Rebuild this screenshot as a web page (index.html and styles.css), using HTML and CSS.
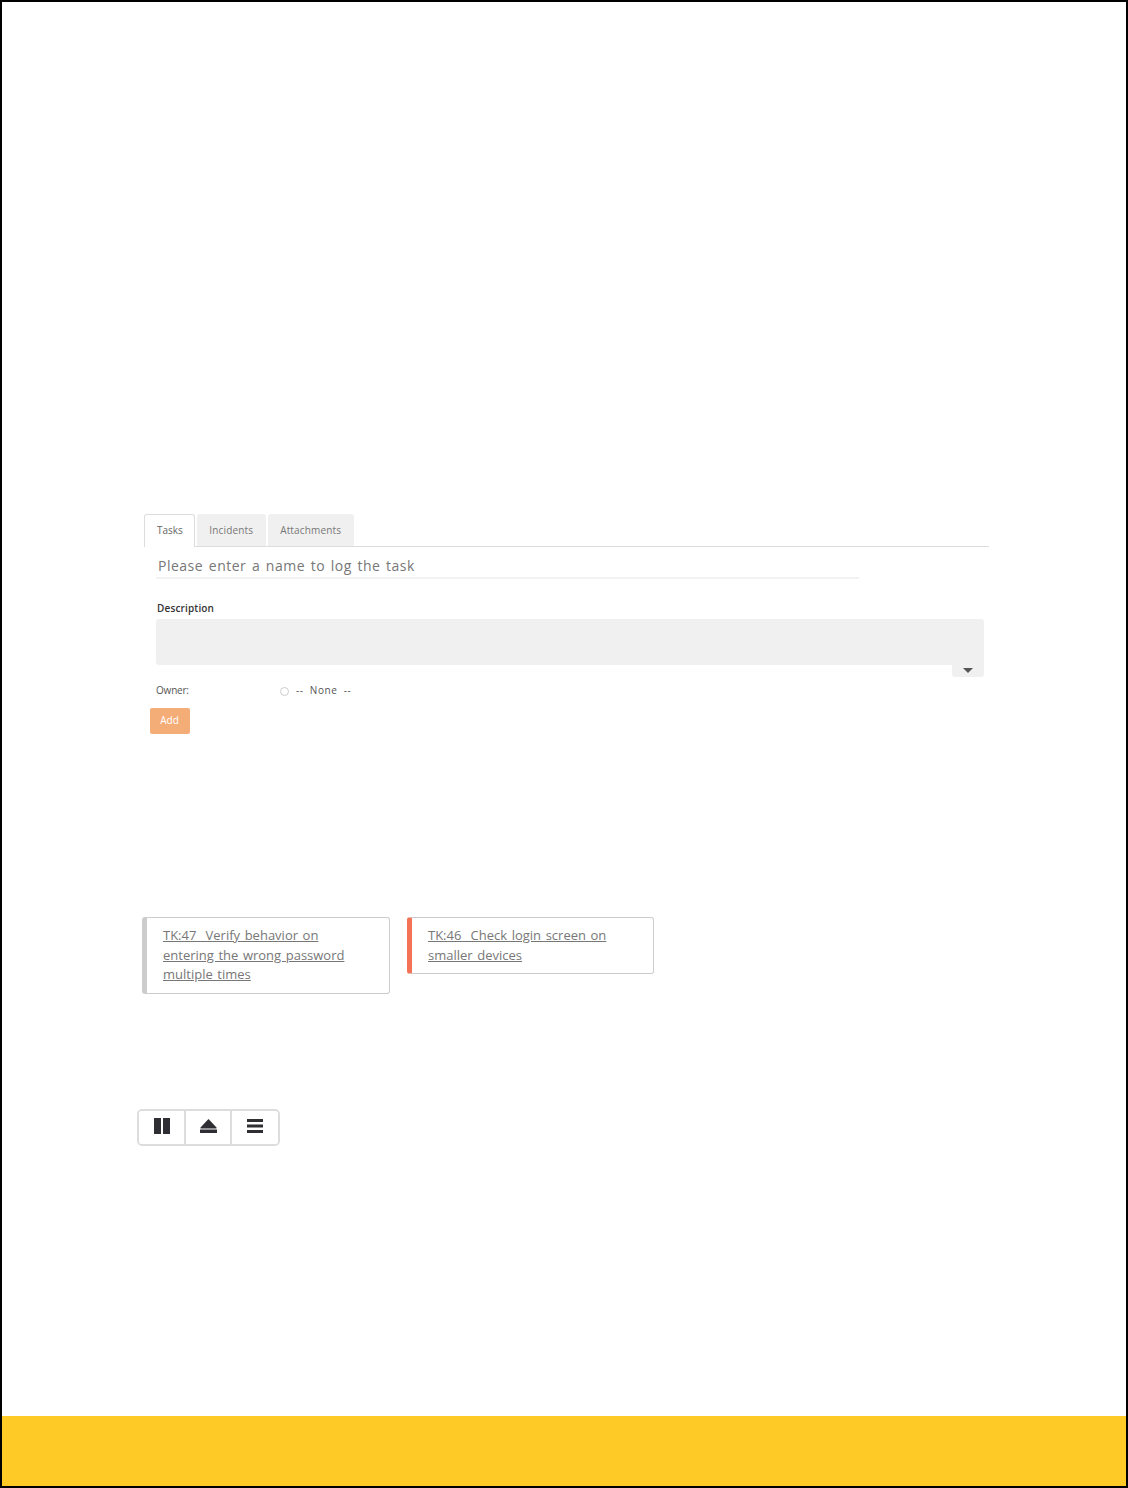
FILE: index.html
```html
<!DOCTYPE html>
<html lang="en">
<head>
<meta charset="UTF-8">
<title>Tasks</title>
<link rel="stylesheet" href="styles.css">
</head>
<body>
<div class="page">
  <div class="content">
    <section class="task-form">
      <div class="tabs">
        <a class="tab active">Tasks</a>
        <a class="tab">Incidents</a>
        <a class="tab">Attachments</a>
      </div>
      <div class="name-input">Please enter a name to log the task</div>
      <div class="desc-label">Description</div>
      <div class="desc-box"></div>
      <div class="desc-toggle"><span class="caret"></span></div>
      <div class="owner-row">
        <span class="owner-label">Owner:</span>
        <span class="radio"></span>
        <span class="owner-value">-- None --</span>
      </div>
      <button class="add-btn">Add</button>
    </section>

    <section class="cards">
      <div class="card grey"><a href="#">TK:47 &nbsp;Verify behavior on entering the wrong password multiple times</a></div>
      <div class="card red"><a href="#">TK:46 &nbsp;Check login screen on smaller devices</a></div>
    </section>

    <div class="toolbar">
      <button class="tool">
        <svg width="16" height="16" viewBox="0 0 16 16"><path d="M0 0h7v16H0zM9 0h7v16H9z"/></svg>
      </button>
      <button class="tool">
        <svg width="17" height="14" viewBox="0 0 17 14"><path d="M8.500 0L16.500 8.500Q17 9.500 16 9.500H1Q0 9.500 .5 8.500zM0 10.500h17V14H0z"/></svg>
      </button>
      <button class="tool">
        <svg width="16" height="14" viewBox="0 0 16 14"><path d="M0 0h16v3H0zM0 5.500h16v3H0zM0 11h16v3H0z"/></svg>
      </button>
    </div>
  </div>
  <div class="footer"></div>
</div>
</body>
</html>
```

FILE: styles.css
```css
html, body {
  margin: 0;
  padding: 0;
}
body {
  background: #fff;
  font-family: "Open Sans", "Noto Sans", sans-serif;
  color: #555;
}
.page {
  box-sizing: border-box;
  width: 1128px;
  height: 1488px;
  border: 2px solid #000;
  display: flex;
  flex-direction: column;
}
.content {
  flex: 1;
}
.footer {
  height: 70px;
  background: #fdca26;
}

/* task form */
.task-form {
  margin: 512px 0 0 142px;
  width: 845px;
}
.tabs {
  display: flex;
  gap: 2px;
  height: 32px;
  border-bottom: 1px solid #ddd;
}
.tab {
  box-sizing: border-box;
  height: 32px;
  padding: 0 12.500px;
  line-height: 33px;
  font-size: 10px;
  letter-spacing: 0.15px;
  color: #777;
  background: #f0f0f0;
  border-radius: 3px 3px 0 0;
}
.tab.active {
  height: 33px;
  padding: 0 11px 0 12px;
  line-height: 31px;
  letter-spacing: 0;
  color: #666;
  background: #fff;
  border: 1px solid #ddd;
  border-bottom: none;
}
.name-input {
  box-sizing: border-box;
  width: 703px;
  height: 32px;
  margin-left: 12px;
  padding-left: 2px;
  line-height: 38px;
  font-size: 14px;
  letter-spacing: 0.5px;
  word-spacing: 1.500px;
  color: #777;
  border-bottom: 2px solid #f2f2f2;
}
.desc-label {
  margin: 22px 0 0 13px;
  font-size: 10px;
  line-height: 14px;
  font-weight: 600;
  letter-spacing: 0.15px;
  color: #333;
}
.desc-box {
  width: 828px;
  height: 46px;
  margin: 4px 0 0 12px;
  background: #f0f0f0;
  border-radius: 3px 3px 0 3px;
}
.desc-toggle {
  width: 32px;
  height: 12px;
  margin-left: 808px;
  background: #f0f0f0;
  border-radius: 0 0 3px 3px;
  display: flex;
  justify-content: center;
  padding-top: 3px;
  box-sizing: border-box;
}
.caret {
  width: 0;
  height: 0;
  border: 5px solid transparent;
  border-top: 5px solid #555;
}
.owner-row {
  display: flex;
  align-items: center;
  height: 14px;
  margin: 6px 0 0 12px;
  font-size: 10px;
  color: #555;
}
.owner-label {
  width: 124px;
  letter-spacing: -0.2px;
}
.radio {
  box-sizing: border-box;
  width: 9px;
  height: 9px;
  margin-top: 2px;
  border: 1px solid #ccc;
  border-radius: 50%;
}
.owner-value {
  margin-left: 7px;
  letter-spacing: 0.6px;
  word-spacing: 3px;
}
.add-btn {
  display: block;
  width: 40px;
  height: 26px;
  margin: 11px 0 0 5.500px;
  padding: 0 0 2px;
  border: none;
  border-radius: 2px;
  background: #f5ad78;
  color: #fff;
  font-family: inherit;
  font-size: 10px;
}

/* task cards */
.cards {
  display: flex;
  align-items: flex-start;
  gap: 17px;
  margin: 183px 0 0 140px;
}
.card {
  box-sizing: border-box;
  width: 248px;
  padding: 8px 30px 8px 16px;
  background: #fff;
  border: 1px solid #ccc;
  border-left-width: 5px;
  border-radius: 3px;
  font-size: 13px;
  line-height: 19.500px;
  word-spacing: 1.200px;
}
.card.grey {
  border-left-color: #ccc;
}
.card.red {
  width: 247px;
  border-left-color: #f47356;
}
.card a {
  color: #777;
}

/* toolbar */
.toolbar {
  display: inline-flex;
  margin: 115px 0 0 135px;
  border: 2px solid #ddd;
  border-radius: 5px;
  vertical-align: top;
}
.tool {
  width: 46px;
  height: 33px;
  padding: 0 0 2px;
  background: #fff;
  border: none;
  border-right: 2px solid #ddd;
  display: flex;
  align-items: center;
  justify-content: center;
}
.tool:first-child {
  width: 47px;
  border-radius: 3px 0 0 3px;
}
.tool:last-child {
  border-right: none;
  border-radius: 0 3px 3px 0;
}
.tool svg {
  fill: #2f2f33;
}
```
